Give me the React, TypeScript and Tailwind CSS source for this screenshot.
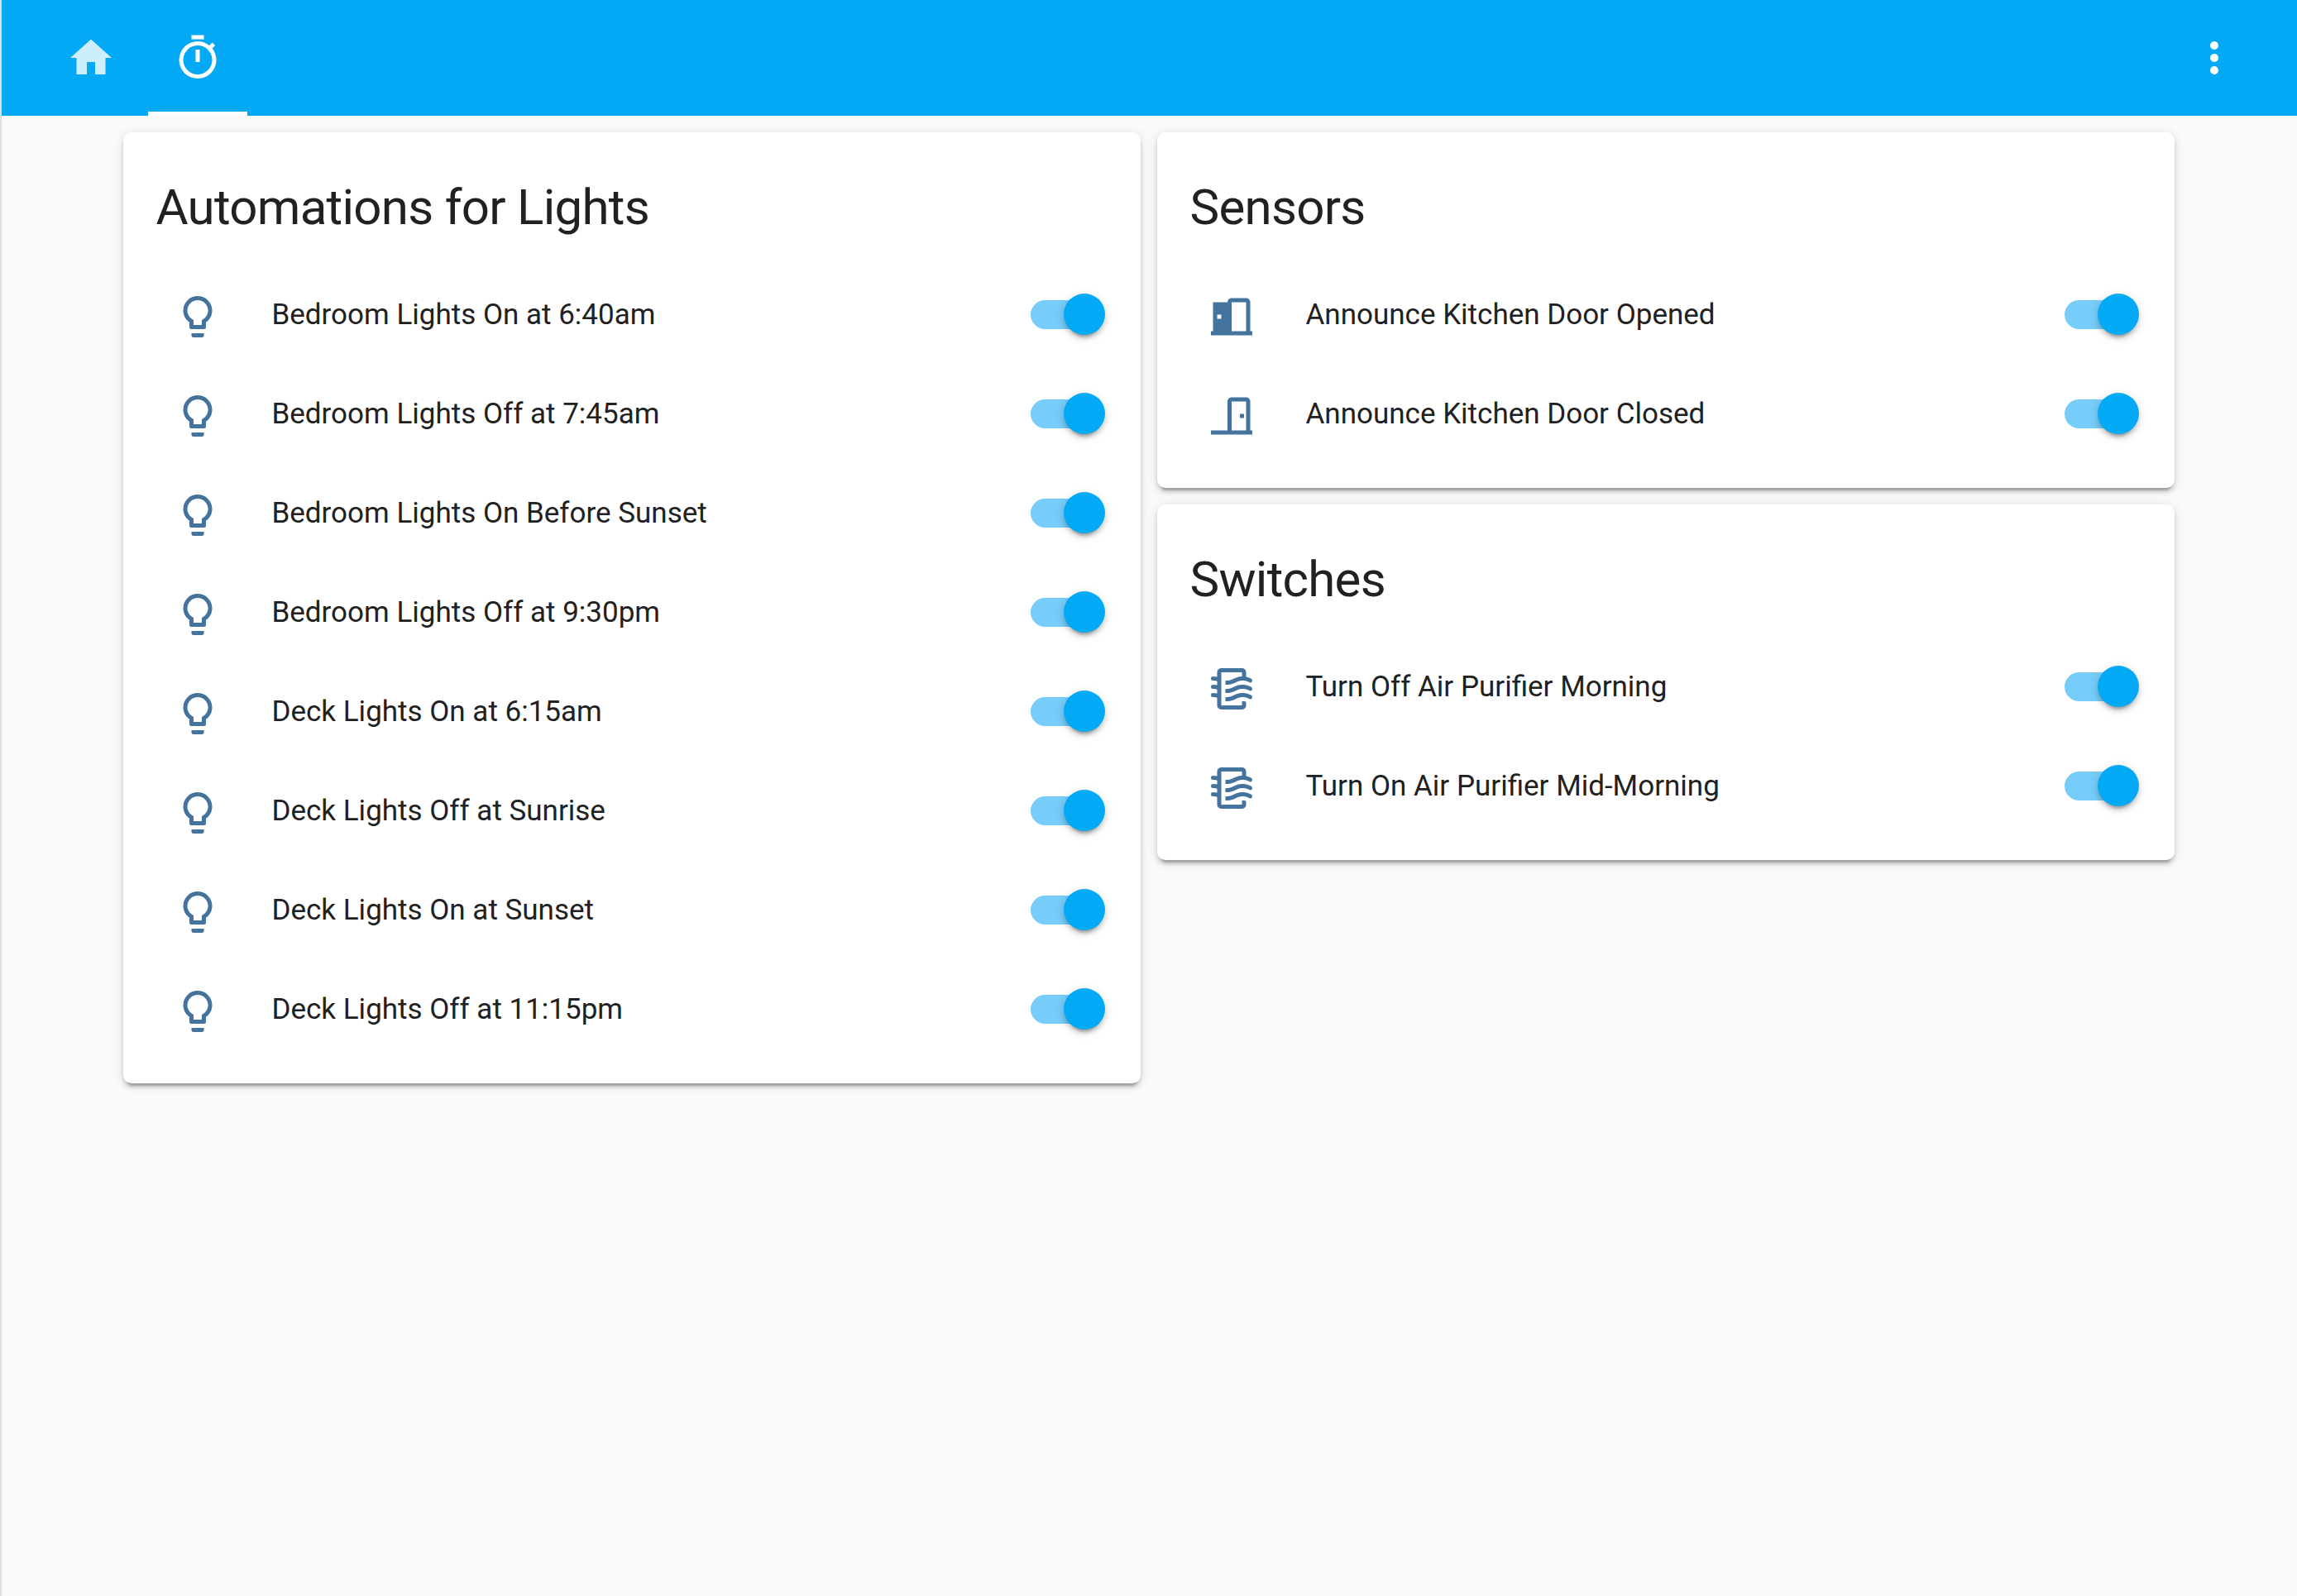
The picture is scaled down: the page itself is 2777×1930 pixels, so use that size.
const doorOpen =
  "M12,3C10.89,3 10,3.89 10,5H3V19H2V21H22V19H21V5C21,3.89 20.11,3 19,3H12M12,5H19V19H12V5M5,11H7V13H5V11Z";
const doorClosed =
  "M12,3C10.89,3 10,3.89 10,5V19H2V21H22V19H21V5C21,3.89 20.11,3 19,3H12M12,5H19V19H12V5M16,11V13H18V11H16Z";
const bulb =
  "M12,2A7,7 0 0,1 19,9C19,11.38 17.81,13.47 16,14.74V17A1,1 0 0,1 15,18H9A1,1 0 0,1 8,17V14.74C6.19,13.47 5,11.38 5,9A7,7 0 0,1 12,2M9,21V20H15V21A1,1 0 0,1 14,22H10A1,1 0 0,1 9,21M12,4A5,5 0 0,0 7,9C7,11.05 8.23,12.81 10,13.58V16H14V13.58C15.77,12.81 17,11.05 17,9A5,5 0 0,0 12,4Z";
const airFilter =
  "M19,18.31V20A2,2 0 0,1 17,22H7A2,2 0 0,1 5,20V16.3C4.54,16.12 3.95,16 3,16A1,1 0 0,1 2,15A1,1 0 0,1 3,14C3.82,14 4.47,14.08 5,14.21V12.3C4.54,12.12 3.95,12 3,12A1,1 0 0,1 2,11A1,1 0 0,1 3,10C3.82,10 4.47,10.08 5,10.21V8.3C4.54,8.12 3.95,8 3,8A1,1 0 0,1 2,7A1,1 0 0,1 3,6C3.82,6 4.47,6.08 5,6.21V4A2,2 0 0,1 7,2H17A2,2 0 0,1 19,4V6.16C20.78,6.47 21.54,7.13 21.71,7.29C22.1,7.68 22.1,8.32 21.71,8.71C21.32,9.1 20.8,9.09 20.29,8.71V8.71C20.29,8.71 19.25,8 17,8C15.74,8 14.91,8.41 13.95,8.9C12.91,9.41 11.74,10 10,10C9.64,10 9.31,10 9,9.96V7.95C9.3,8 9.63,8 10,8C11.26,8 12.09,7.59 13.05,7.11C14.09,6.59 15.27,6 17,6V4H7V20H17V18C18.5,18 18.97,18.29 19,18.31M17,10C15.27,10 14.09,10.59 13.05,11.11C12.09,11.59 11.26,12 10,12C9.63,12 9.3,12 9,11.95V13.96C9.31,14 9.64,14 10,14C11.74,14 12.91,13.41 13.95,12.9C14.91,12.41 15.74,12 17,12C19.25,12 20.29,12.71 20.29,12.71V12.71C20.8,13.09 21.32,13.1 21.71,12.71C22.1,12.32 22.1,11.68 21.71,11.29C21.54,11.13 20.78,10.47 19,10.16V10.16C18.4,10.06 17.74,10 17,10M17,14C15.27,14 14.09,14.59 13.05,15.11C12.09,15.59 11.26,16 10,16C9.63,16 9.3,16 9,15.95V17.96C9.31,18 9.64,18 10,18C11.74,18 12.91,17.41 13.95,16.9C14.91,16.41 15.74,16 17,16C19.25,16 20.29,16.71 20.29,16.71V16.71C20.8,17.09 21.32,17.1 21.71,16.71C22.1,16.32 22.1,15.68 21.71,15.29C21.54,15.13 20.78,14.47 19,14.16V14.16C18.4,14.06 17.74,14 17,14Z";
const home = "M10,20V14H14V20H19V12H22L12,3L2,12H5V20H10Z";
const timer =
  "M12,20A7,7 0 0,1 5,13A7,7 0 0,1 12,6A7,7 0 0,1 19,13A7,7 0 0,1 12,20M19.03,7.39L20.45,5.97C20,5.46 19.55,5 19.04,4.56L17.62,6C16.07,4.74 14.12,4 12,4A9,9 0 0,0 3,13A9,9 0 0,0 12,22C17,22 21,17.97 21,13C21,10.88 20.26,8.93 19.03,7.39M11,14H13V8H11M15,1H9V3H15V1Z";
const dots =
  "M12,16A2,2 0 0,1 14,18A2,2 0 0,1 12,20A2,2 0 0,1 10,18A2,2 0 0,1 12,16M12,10A2,2 0 0,1 14,12A2,2 0 0,1 12,14A2,2 0 0,1 10,12A2,2 0 0,1 12,10M12,4A2,2 0 0,1 14,6A2,2 0 0,1 12,8A2,2 0 0,1 10,6A2,2 0 0,1 12,4Z";

function Icon({ d, className }: { d: string; className: string }) {
  return (
    <svg viewBox="0 0 24 24" className={className} fill="currentColor">
      <path d={d} fillRule="evenodd" />
    </svg>
  );
}

function Row({ icon, label }: { icon: string; label: string }) {
  return (
    <div className="flex items-center h-[120px]">
      <div className="w-[100px] flex justify-center shrink-0">
        <Icon d={icon} className="w-[60px] h-[60px] mt-[6px] text-[#44739e]" />
      </div>
      <div className="ml-[40px] pt-[2px] flex-1 text-[35px] text-[#212121]">{label}</div>
      {/* toggle */}
      <div className="relative w-[90px] h-[50px] mr-[3px] shrink-0">
        <div className="absolute left-0 top-[7.5px] w-[85px] h-[35px] rounded-full bg-[#76cdf9]" />
        <div className="absolute right-0 top-0 w-[50px] h-[50px] rounded-full bg-[#03a9f4] shadow-[0_5px_5px_rgba(0,0,0,0.14),0_2.5px_12.5px_rgba(0,0,0,0.12),0_7.5px_2.5px_-5px_rgba(0,0,0,0.2)]" />
      </div>
    </div>
  );
}

function Card({ title, rows }: { title: string; rows: { icon: string; label: string }[] }) {
  return (
    <div className="bg-white rounded-[10px] px-[40px] pt-[40px] pb-[30px] shadow-[0_5px_5px_rgba(0,0,0,0.14),0_2.5px_12.5px_rgba(0,0,0,0.12),0_7.5px_2.5px_-5px_rgba(0,0,0,0.2)]">
      <div className="h-[100px] pt-[1px] leading-[100px] text-[60px] tracking-[-0.012em] text-[#212121] mb-[20px]">
        {title}
      </div>
      {rows.map((r) => (
        <Row key={r.label} icon={r.icon} label={r.label} />
      ))}
    </div>
  );
}

const lights = [
  "Bedroom Lights On at 6:40am",
  "Bedroom Lights Off at 7:45am",
  "Bedroom Lights On Before Sunset",
  "Bedroom Lights Off at 9:30pm",
  "Deck Lights On at 6:15am",
  "Deck Lights Off at Sunrise",
  "Deck Lights On at Sunset",
  "Deck Lights Off at 11:15pm",
];

export default function App() {
  return (
    <div className="min-h-[1930px] bg-[#fafafa] border-l-2 border-[#e0e0e0] font-['Roboto',sans-serif]">
      <header className="h-[140px] bg-[#03a9f4] flex items-center text-white">
        <div className="flex h-full ml-[48px]">
          <div className="w-[120px] h-full flex items-center justify-center text-white/80 mr-[9px]">
            <Icon d={home} className="w-[60px] h-[60px]" />
          </div>
          <div className="w-[120px] h-full flex items-center justify-center border-b-[5px] border-white pt-[5px]">
            <Icon d={timer} className="w-[60px] h-[60px]" />
          </div>
        </div>
        <div className="ml-auto mr-[70px]">
          <Icon d={dots} className="w-[60px] h-[60px]" />
        </div>
      </header>
      <main className="flex justify-center gap-[20px] pt-[20px] pr-[2px]">
        <div className="w-[1230px]">
          <Card title="Automations for Lights" rows={lights.map((label) => ({ icon: bulb, label }))} />
        </div>
        <div className="w-[1230px] flex flex-col gap-[20px]">
          <Card
            title="Sensors"
            rows={[
              { icon: doorOpen, label: "Announce Kitchen Door Opened" },
              { icon: doorClosed, label: "Announce Kitchen Door Closed" },
            ]}
          />
          <Card
            title="Switches"
            rows={[
              { icon: airFilter, label: "Turn Off Air Purifier Morning" },
              { icon: airFilter, label: "Turn On Air Purifier Mid-Morning" },
            ]}
          />
        </div>
      </main>
    </div>
  );
}
